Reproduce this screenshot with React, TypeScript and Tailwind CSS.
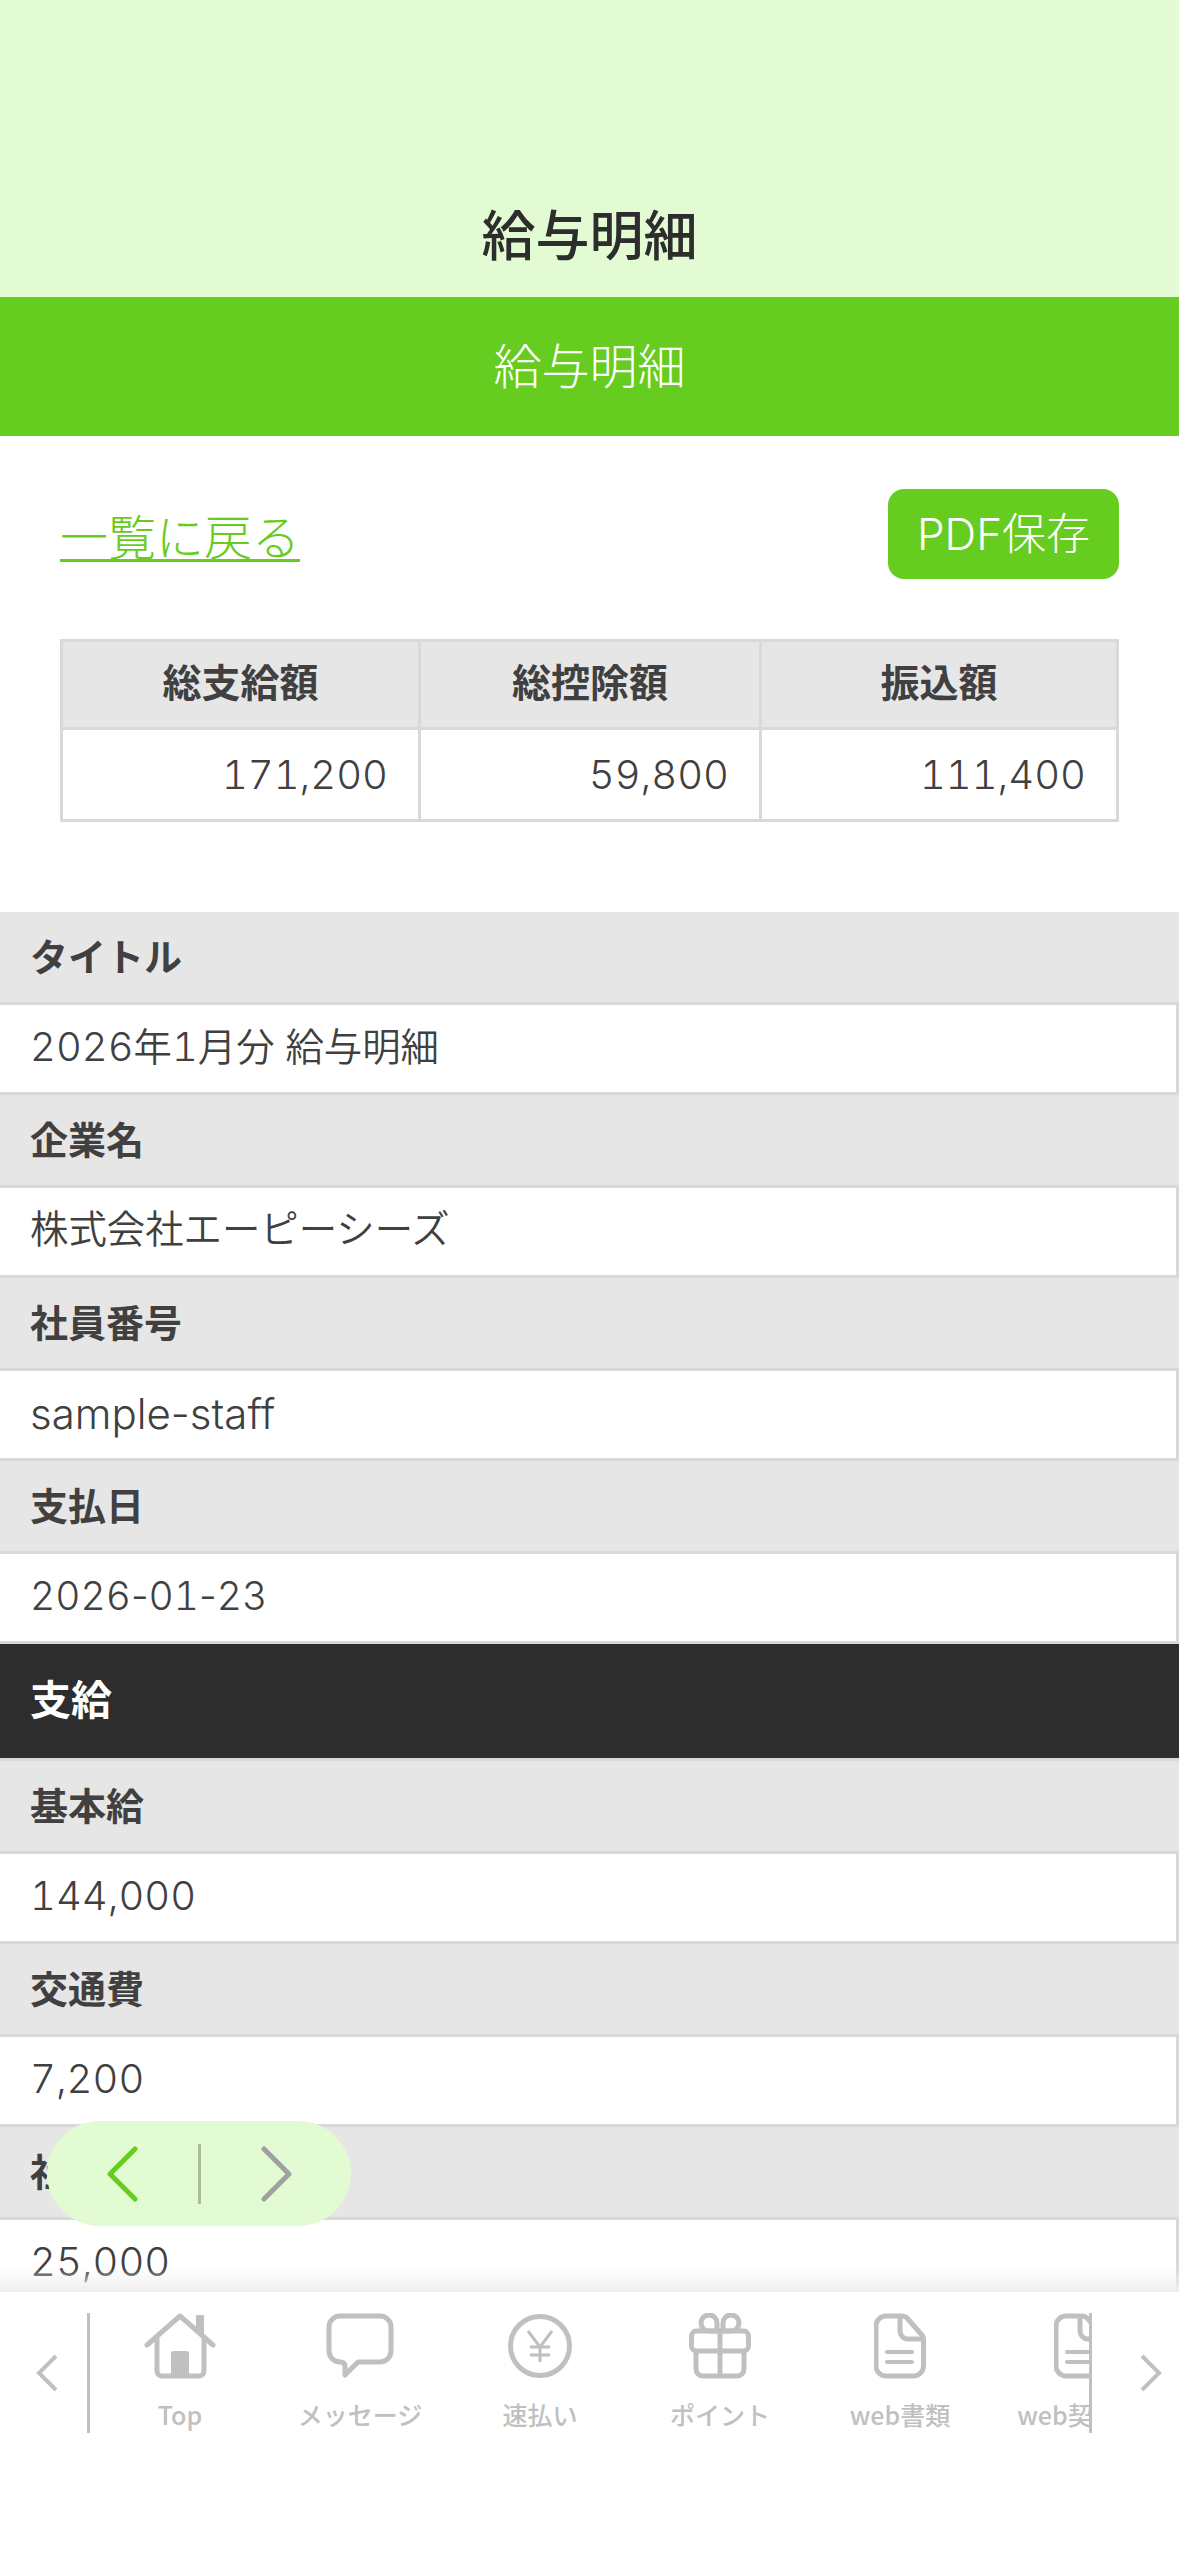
import React from "react";

const jp = "font-['Inter','Noto_Sans_CJK_JP',sans-serif]";
const latin = "text-[40px] tabular-nums";

const topRows = [
  { label: "タイトル", value: <><span className={latin}>2026</span>年<span className={latin}>1</span>月分 給与明細</> },
  { label: "企業名", value: "株式会社エーピーシーズ" },
  { label: "社員番号", value: <span className="text-[42px]">sample-staff</span> },
  {
    label: "支払日",
    value: (
      <span className="text-[39px]">
        <span className="tabular-nums">2026</span>-<span className="tabular-nums">01</span>-<span className="tabular-nums">23</span>
      </span>
    ),
  },
];

const payRows = [
  { label: "基本給", value: <span className={latin}>144,000</span> },
  { label: "交通費", value: <span className={latin}>7,200</span> },
  { label: "社宅手当", value: <span className={latin}>25,000</span> },
];

const Row = ({ label, value }: { label: string; value: React.ReactNode }) => (
  <>
    <div className="flex h-[90px] items-center bg-[#e6e6e6] pl-[30px] text-[38px] font-bold text-[#404040]">
      {label}
    </div>
    <div className="flex h-[93px] items-center whitespace-pre border-y-[3px] border-r-[3px] border-[#d9d9d9] bg-white pb-[3px] pl-[30px] text-[38.4px] font-[350] text-[#404040]">
      <span>{value}</span>
    </div>
  </>
);

const HomeIcon = () => (
  <svg width="72" height="66" viewBox="0 0 72 66" fill="none" stroke="#c0c0c0" strokeWidth="5" strokeLinecap="round" strokeLinejoin="round">
    <path d="M3 32 L36 3 L69 32" />
    <path d="M13 26 V58 a5 5 0 0 0 5 5 H55 a5 5 0 0 0 5-5 V26" />
    <path d="M53 16 V3 H59 V21 Z" fill="#c0c0c0" strokeWidth="2" />
    <path d="M27 63 V41 a3 3 0 0 1 3-3 H42 a3 3 0 0 1 3 3 V63 Z" fill="#c0c0c0" stroke="none" />
  </svg>
);

const BubbleIcon = () => (
  <svg width="68" height="66" viewBox="0 0 68 66" fill="none" stroke="#c0c0c0" strokeWidth="5" strokeLinejoin="round">
    <path d="M14 3 H54 a11 11 0 0 1 11 11 V38 a11 11 0 0 1-11 11 H32 L19 62 V53 Q19 49 14 49 a11 11 0 0 1-11-11 V14 a11 11 0 0 1 11-11 Z" />
  </svg>
);

const YenIcon = () => (
  <svg width="64" height="64" viewBox="0 0 64 64" fill="none" stroke="#c0c0c0">
    <circle cx="32" cy="32" r="29.5" strokeWidth="5" />
    <path d="M20 17 L32 33 L44 17 M32 33 V48 M22 33 H42 M22 41 H42" strokeWidth="3" />
  </svg>
);

const GiftIcon = () => (
  <svg width="62" height="66" viewBox="0 0 62 66" fill="none" stroke="#c0c0c0" strokeWidth="5" strokeLinejoin="round">
    <path d="M31 18 H20 a8 8 0 1 1 8-8 V18" />
    <path d="M31 18 H42 a8 8 0 1 0-8-8 V18" />
    <rect x="2.5" y="18" width="57" height="20" rx="5" />
    <path d="M7 38 V56 a7 7 0 0 0 7 7 H48 a7 7 0 0 0 7-7 V38" />
    <path d="M31 18 V63" />
  </svg>
);

const FileIcon = () => (
  <svg width="52" height="66" viewBox="0 0 52 66" fill="none" stroke="#c0c0c0" strokeWidth="5" strokeLinejoin="round" strokeLinecap="round">
    <path d="M12 3 H27 Q31 3 33 5 L47 21 Q49.500 23 49.500 27 V53 a10 10 0 0 1-10 10 H12 a10 10 0 0 1-10-10 V13 a10 10 0 0 1 10-10 Z" />
    <path d="M26 4 V18 a8 8 0 0 0 8 8 H48" />
    <path d="M13 39 H38 M13 49 H38" strokeWidth="4" />
  </svg>
);

const tabs = [
  { label: "Top", icon: <HomeIcon /> },
  { label: "メッセージ", icon: <BubbleIcon /> },
  { label: "速払い", icon: <YenIcon /> },
  { label: "ポイント", icon: <GiftIcon /> },
  { label: "web書類", icon: <FileIcon /> },
  { label: "web契約書", icon: <FileIcon /> },
];

export default function App() {
  return (
    <div className={`relative h-[2556px] w-[1179px] overflow-hidden bg-white ${jp}`}>
      <header className="flex h-[297px] items-end justify-center bg-[#e2fbd2] pb-[20px] text-[54px] font-medium leading-[80px] text-[#2d2d2d]">
        給与明細
      </header>
      <div className="flex h-[139px] items-center justify-center bg-[#66cd20] text-[48px] font-light text-white">
        給与明細
      </div>

      <div className="flex items-start justify-between pl-[60px] pr-[60px] pt-[53px]">
        <a className="mt-[13px] text-[48px] font-light leading-[72px] text-[#66cd20] underline decoration-[3px] underline-offset-[4px]">一覧に戻る</a>
        <button className="flex h-[90px] w-[231px] items-center justify-center rounded-[16px] bg-[#66cd20] text-[44px] font-light text-white">
          PDF保存
        </button>
      </div>

      <div className="pl-[60px] pt-[60px]">
        <table className="w-[1056px] table-fixed border-collapse border-[3px] border-[#d9d9d9] text-[#404040]">
          <colgroup>
            <col className="w-[358px]" />
            <col className="w-[341px]" />
            <col className="w-[357px]" />
          </colgroup>
          <thead>
            <tr className="h-[88px] bg-[#e6e6e6] text-[39px] font-bold">
              <th className="border-[3px] border-[#d9d9d9] pb-[2px]">総支給額</th>
              <th className="border-[3px] border-[#d9d9d9] pb-[2px]">総控除額</th>
              <th className="border-[3px] border-[#d9d9d9] pb-[2px]">振込額</th>
            </tr>
          </thead>
          <tbody>
            <tr className="h-[92px] text-right text-[40px] font-[350] tabular-nums">
              <td className="border-[3px] border-[#d9d9d9] pr-[30px]">171,200</td>
              <td className="border-[3px] border-[#d9d9d9] pr-[30px]">59,800</td>
              <td className="border-[3px] border-[#d9d9d9] pr-[30px]">111,400</td>
            </tr>
          </tbody>
        </table>
      </div>

      <div className="mt-[90px]">
        {topRows.map((r) => (
          <Row key={r.label} label={r.label} value={r.value} />
        ))}
        <div className="flex h-[114px] items-center bg-[#2d2d2d] pl-[30px] text-[41px] font-bold text-white">支給</div>
        <div className="h-[3px] bg-[#d9d9d9]" />
        {payRows.map((r) => (
          <Row key={r.label} label={r.label} value={r.value} />
        ))}
      </div>

      {/* floating prev/next pill */}
      <div className="absolute left-[47px] top-[2121px] flex h-[105px] w-[304px] items-center rounded-full bg-[#e2fbd2]">
        <div className="flex w-[151px] justify-center">
          <svg width="34" height="56" viewBox="0 0 34 56" fill="none" stroke="#66cd20" strokeWidth="5" strokeLinecap="round" strokeLinejoin="round">
            <path d="M29 3 L4 28 L29 53" />
          </svg>
        </div>
        <div className="h-[60px] w-[3px] bg-[#a9bd9f]" />
        <div className="flex flex-1 justify-center">
          <svg width="34" height="56" viewBox="0 0 34 56" fill="none" stroke="#a0a0a0" strokeWidth="5" strokeLinecap="round" strokeLinejoin="round">
            <path d="M5 3 L30 28 L5 53" />
          </svg>
        </div>
      </div>

      {/* bottom tab bar */}
      <div className="absolute bottom-0 left-0 h-[264px] w-full bg-white">
        <div className="absolute -top-[24px] left-0 h-[24px] w-full bg-linear-to-t from-[#eeeeee] to-transparent" />
        <div className="flex pt-[21px]">
          <div className="flex h-[120px] w-[87px] items-center justify-center pl-[6px]">
            <svg width="24" height="38" viewBox="0 0 24 38" fill="none" stroke="#c0c0c0" strokeWidth="4">
              <path d="M21 2 L4 19 L21 36" />
            </svg>
          </div>
          <div className="flex h-[120px] w-[1005px] overflow-hidden border-x-[3px] border-[#c0c0c0]">
            {tabs.map((t) => (
              <div key={t.label} className="flex w-[180px] shrink-0 flex-col items-center">
                <div className="flex h-[66px] items-center justify-center">{t.icon}</div>
                <span className="mt-[17px] whitespace-nowrap font-['Noto_Sans_CJK_JP',sans-serif] text-[25px] font-medium leading-[36px] text-[#c0c0c0]">
                  {t.label}
                </span>
              </div>
            ))}
          </div>
          <div className="flex h-[120px] flex-1 items-center justify-center pl-[30px]">
            <svg width="24" height="38" viewBox="0 0 24 38" fill="none" stroke="#c0c0c0" strokeWidth="4">
              <path d="M3 2 L20 19 L3 36" />
            </svg>
          </div>
        </div>
      </div>
    </div>
  );
}
